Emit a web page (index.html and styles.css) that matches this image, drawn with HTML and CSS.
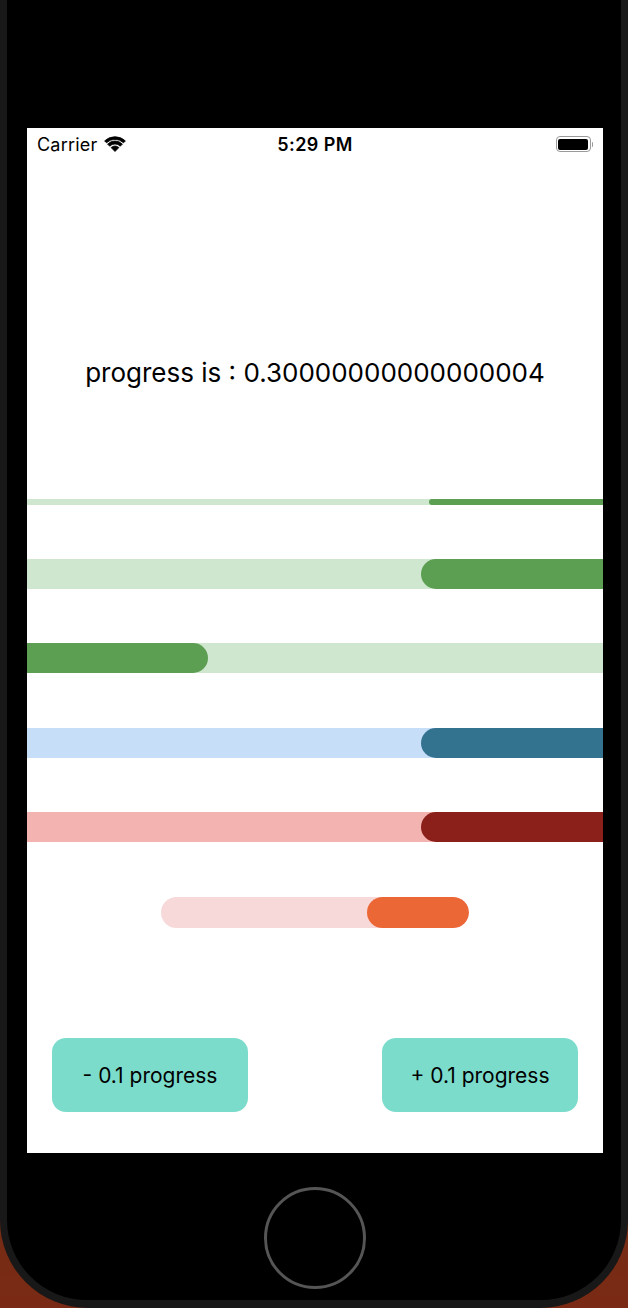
FILE: index.html
```html
<!DOCTYPE html>
<html>
<head>
<meta charset="utf-8">
<link rel="stylesheet" href="styles.css">
</head>
<body>
<div class="phone">
  <div class="bezel">
    <div class="screen">
      <div class="status">
        <div class="status-left">
          <span class="carrier">Carrier</span>
          <svg class="wifi" width="22" height="16" viewBox="0 0 22 16">
            <path d="M11 15.5 L7.11 11.61 A5.5 5.5 0 0 1 14.89 11.61 Z" fill="#000" stroke="#000" stroke-width="0.8" stroke-linejoin="round"/>
            <path d="M3.58 8.08 A10.5 10.5 0 0 1 18.42 8.08 L16.3 10.2 A7.5 7.5 0 0 0 5.7 10.2 Z" fill="#000" stroke="#000" stroke-width="0.8" stroke-linejoin="round"/>
            <path d="M0.6 4.9 A15 15 0 0 1 21.4 4.9 L19.5 6.8 A12.3 12.3 0 0 0 2.5 6.8 Z" fill="#000" stroke="#000" stroke-width="0.8" stroke-linejoin="round"/>
          </svg>
        </div>
        <span class="time">5:29 PM</span>
        <div class="status-right">
          <div class="battery"><div class="battery-level"></div></div>
          <div class="battery-nub"></div>
        </div>
      </div>
      <div class="content">
        <p class="label">progress is : 0.30000000000000004</p>
        <div class="bar thin green-track"><div class="fill right green-fill" style="width:174px"></div></div>
        <div class="bar thick gap-a green-track"><div class="fill right green-fill" style="width:182px"></div></div>
        <div class="bar thick gap-a green-track"><div class="fill left green-fill" style="width:181px"></div></div>
        <div class="bar thick gap-b blue-track"><div class="fill right blue-fill" style="width:182px"></div></div>
        <div class="bar thick gap-a red-track"><div class="fill right red-fill" style="width:182px"></div></div>
        <div class="pill-row">
          <div class="pill"><div class="pill-fill" style="width:102px"></div></div>
        </div>
        <div class="buttons">
          <button class="btn">- 0.1 progress</button>
          <button class="btn">+ 0.1 progress</button>
        </div>
      </div>
    </div>
    <div class="home-area">
      <div class="home-button"></div>
    </div>
  </div>
</div>
</body>
</html>
```
FILE: styles.css
```css
html, body {
  margin: 0;
  padding: 0;
}
body {
  width: 628px;
  height: 1308px;
  overflow: hidden;
  background: linear-gradient(180deg, #9a7420 0%, #5a3a18 50%, #7a2a14 100%);
  font-family: Inter, "Noto Sans", sans-serif;
}
.phone {
  width: 628px;
  height: 1308px;
  box-sizing: border-box;
  background: #181818;
  border-radius: 0 0 88px 88px;
  padding: 0 7px 8px 7px;
  display: flex;
}
.bezel {
  flex: 1;
  background: #000;
  border-radius: 0 0 80px 80px;
  display: flex;
  flex-direction: column;
  align-items: flex-start;
  padding-top: 128px;
}
.screen {
  width: 576px;
  height: 1025px;
  margin-left: 20px;
  background: #fff;
  display: flex;
  flex-direction: column;
}
.status {
  height: 32px;
  display: flex;
  align-items: center;
  justify-content: space-between;
  padding: 0 10px 0 10px;
  position: relative;
}
.status-left {
  display: flex;
  align-items: center;
  gap: 7px;
}
.carrier {
  font-size: 18px;
  color: #000;
  letter-spacing: 0.2px;
}
.wifi {
  display: block;
  margin-top: -1px;
}
.time {
  position: absolute;
  left: 0;
  right: 0;
  text-align: center;
  font-size: 18px;
  font-weight: 600;
  letter-spacing: 0.4px;
  color: #000;
  pointer-events: none;
}
.status-right {
  display: flex;
  align-items: center;
}
.battery {
  width: 30px;
  height: 11px;
  border: 1.5px solid #9a9a9a;
  border-radius: 4px;
  padding: 1.5px;
  box-sizing: content-box;
}
.battery-level {
  width: 100%;
  height: 100%;
  background: #000;
  border-radius: 2px;
}
.battery-nub {
  width: 1.5px;
  height: 5px;
  background: #9a9a9a;
  border-radius: 0 1px 1px 0;
  margin-left: 1px;
}
.content {
  flex: 1;
  display: flex;
  flex-direction: column;
}
.label {
  margin: 198px 0 0 0;
  height: 30px;
  line-height: 30px;
  text-align: center;
  font-size: 26px;
  color: #000;
}
.bar {
  display: flex;
  overflow: hidden;
}
.thin {
  height: 6px;
  margin-top: 111px;
}
.thick {
  height: 30px;
}
.thin + .thick {
  margin-top: 54px;
}
.gap-a {
  margin-top: 54px;
}
.thin + .gap-a {
  margin-top: 54px;
}
.gap-b {
  margin-top: 55px;
}
.right {
  margin-left: auto;
}
.fill {
  height: 100%;
}
.fill.right {
  border-radius: 15px 0 0 15px;
}
.fill.left {
  border-radius: 0 15px 15px 0;
}
.thin .fill.right {
  border-radius: 3px 0 0 3px;
}
.green-track { background: #cfe6cf; }
.green-fill { background: #5c9e52; }
.blue-track { background: #c6def8; }
.blue-fill { background: #347390; }
.red-track { background: #f3b3b0; }
.red-fill { background: #8b1f1a; }
.pill-row {
  margin-top: 55px;
  display: flex;
  justify-content: center;
}
.pill {
  width: 308px;
  height: 31px;
  border-radius: 16px;
  background: #f8d9d9;
  display: flex;
  justify-content: flex-end;
  overflow: hidden;
}
.pill-fill {
  height: 100%;
  border-radius: 16px;
  background: #ec6736;
}
.buttons {
  margin-top: 110px;
  display: flex;
  justify-content: space-between;
  padding: 0 25px;
}
.btn {
  width: 196px;
  height: 74px;
  border: none;
  border-radius: 14px;
  background: #7cdccc;
  color: #000;
  font-family: Inter, "Noto Sans", sans-serif;
  font-size: 21px;
  padding: 0;
}
.home-area {
  flex: 1;
  align-self: stretch;
  display: flex;
  align-items: center;
  justify-content: center;
  padding-top: 22px;
}
.home-button {
  width: 96px;
  height: 96px;
  border: 3px solid #555;
  border-radius: 50%;
  margin-left: 1px;
}
```
